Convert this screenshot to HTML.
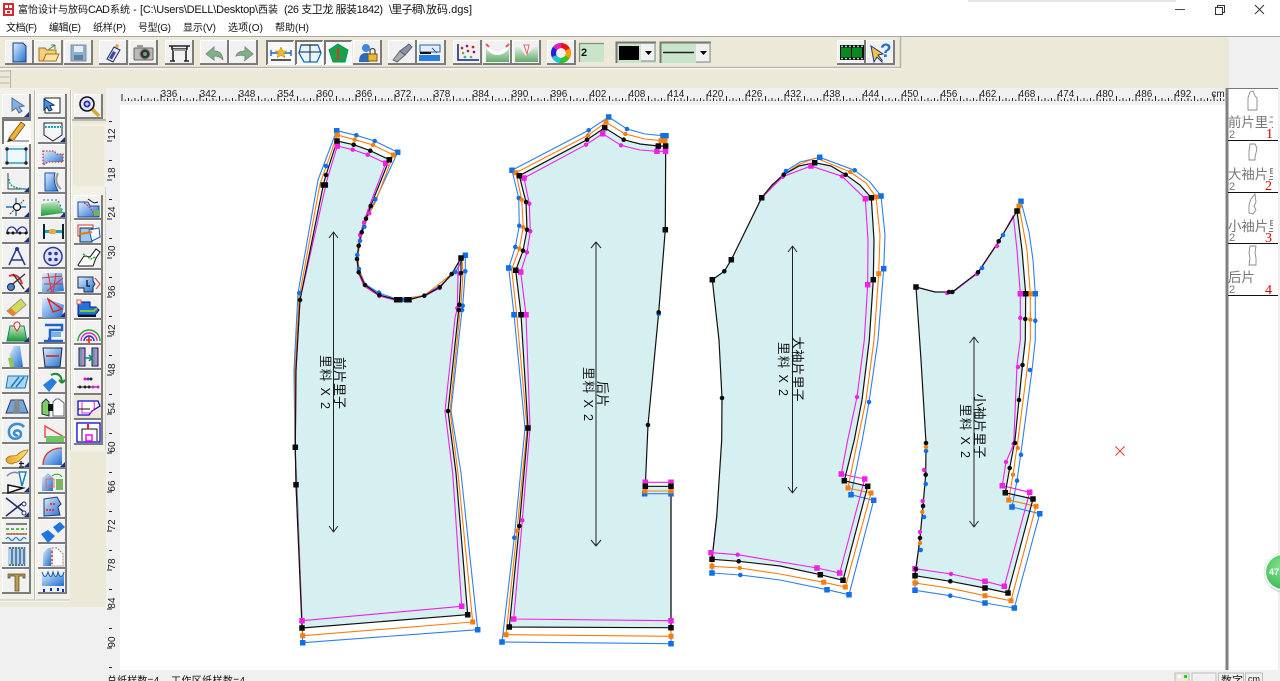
<!DOCTYPE html>
<html><head><meta charset="utf-8"><title>富怡设计与放码CAD系统</title>
<style>
html,body{margin:0;padding:0;background:#fff;width:1280px;height:681px;overflow:hidden}
svg{display:block;position:absolute;left:0;top:0}
text{font-family:"Liberation Sans","Noto Sans CJK SC",sans-serif}
.m{font-size:10px;fill:#111}
.l{font-size:11px;fill:#111}
.r{font-size:10px;fill:#222;text-anchor:middle}
.p{font-size:13px;fill:#111;text-anchor:middle}
.q{font-size:12.5px;fill:#111;text-anchor:middle}
.t{font-size:13.4px;fill:#777}
.n{font-size:11px;fill:#777}
.o{font-size:14px;fill:#d00;font-family:"Liberation Serif",serif}
</style></head><body>
<svg width="1280" height="681" viewBox="0 0 1280 681" xmlns="http://www.w3.org/2000/svg">
<defs>
<linearGradient id="bl" x1="0" y1="0" x2="1" y2="1"><stop offset="0" stop-color="#dff0ff"/><stop offset="1" stop-color="#1f6fd0"/></linearGradient>
<linearGradient id="gr" x1="0" y1="0" x2="0" y2="1"><stop offset="0" stop-color="#c9e9c9"/><stop offset="1" stop-color="#1d9a35"/></linearGradient>
<linearGradient id="gd" x1="0" y1="0" x2="0" y2="1"><stop offset="0" stop-color="#e9f3e9"/><stop offset="1" stop-color="#62ab6b"/></linearGradient>
<linearGradient id="ye" x1="0" y1="0" x2="1" y2="0"><stop offset="0" stop-color="#e5a520"/><stop offset="1" stop-color="#ffe27a"/></linearGradient>
<radialGradient id="gc" cx=".4" cy=".35" r=".8"><stop offset="0" stop-color="#7fe08b"/><stop offset="1" stop-color="#2fb24c"/></radialGradient>
<g id="b"><rect width="29" height="25" fill="#f1f1f1"/><path d="M.5 25V.5H29" fill="none" stroke="#fff"/><path d="M28 0V24H0" fill="none" stroke="#7c7c7c" stroke-width="2"/></g>
<g id="c"><rect width="28" height="25" fill="#f8f8f8"/><path d="M1 25V1H28" fill="none" stroke="#777" stroke-width="2"/><path d="M27.5 1V24.5H1" fill="none" stroke="#fff"/></g>
<path id="k" d="M27 23l-5 0 5-5z" fill="#1b2f88"/>
<pattern id="tt" x="160.5" y="0" width="39" height="17" patternUnits="userSpaceOnUse"><path d="M.5 9V16M20 11V16M7 13V16M13.500 13V16M26.500 13V16M33 13V16M3.750 14.500V16M10.250 14.500V16M16.750 14.500V16M23.250 14.500V16M29.750 14.500V16M36.250 14.500V16" stroke="#222" stroke-width="1" fill="none"/></pattern>
<pattern id="tl" x="0" y="140.500" width="14" height="39" patternUnits="userSpaceOnUse"><path d="M9 .5H14M11 20H14" stroke="#222" fill="none"/></pattern>
<clipPath id="tc"><rect x="1228" y="88" width="45" height="210"/></clipPath>
<clipPath id="gcc"><rect x="1240" y="540" width="40" height="70"/></clipPath>
<clipPath id="sc"><rect x="0" y="670" width="1280" height="11"/></clipPath>
</defs>

<!-- base -->
<rect width="1280" height="681" fill="#fff"/>
<rect x="968" y="0" width="208" height="2" fill="#e4e4e4"/>
<rect y="36" width="1280" height="634" fill="#f0f0f0"/>
<rect y="36" width="1229" height="52" fill="#ece9d8"/>
<path d="M0 36.500H1280" stroke="#a9a9a9"/>
<path d="M0 67.500H901M900.500 37V68" stroke="#b4b4b4" stroke-width="1.500" fill="none"/>
<path d="M0 68.800H901" stroke="#fff"/>
<path d="M0 71H11M0 77H11M0 83H11M10.500 70V88" stroke="#b9b6a8" fill="none"/>

<!-- title -->
<rect x="3" y="3" width="11" height="13" fill="#d9262c"/>
<path d="M5 5h3v3H5zM9 5h3v3H9zM5 10h7v4H5z" fill="#fff"/><path d="M7 11h3v2H7z" fill="#d9262c"/>
<text x="18" y="13" class="m" textLength="70">富怡设计与放码</text>
<text x="88" y="13" class="l" textLength="22">CAD</text>
<text x="110" y="13" class="m" textLength="20">系统</text>
<text x="133" y="13" class="l">-</text>
<text x="140" y="13" class="l" textLength="118">[C:\Users\DELL\Desktop\</text>
<text x="258" y="13" class="m" textLength="20">西装</text>
<text x="284" y="13" class="l" textLength="99">(26 支卫龙 服装1842)</text>
<text x="389" y="13" class="l" textLength="36">\里子稠\</text>
<text x="426" y="13" class="l" textLength="46">放码.dgs]</text>
<path d="M1175 9.500H1185" stroke="#444"/>
<path d="M1215.500 7.500h7v7h-7zM1217.500 7V5.500h7v7H1223" fill="none" stroke="#333"/>
<path d="M1255 5l9 9M1264 5l-9 9" stroke="#333" fill="none"/>

<!-- menu -->
<text x="6" y="31" class="m" textLength="31">文档(F)</text>
<text x="49" y="31" class="m" textLength="32">编辑(E)</text>
<text x="93" y="31" class="m" textLength="33">纸样(P)</text>
<text x="138" y="31" class="m" textLength="33">号型(G)</text>
<text x="183" y="31" class="m" textLength="33">显示(V)</text>
<text x="228" y="31" class="m" textLength="35">选项(O)</text>
<text x="275" y="31" class="m" textLength="34">帮助(H)</text>

<!-- top toolbar -->
<g transform="translate(5,40)"><use href="#b"/><path d="M8 3h10l3 3v16H8z" fill="url(#bl)" stroke="#1c3a78"/></g>
<g transform="translate(34,40)"><use href="#b"/><path d="M5 8h6l2 2h9v11H5z" fill="#f4cf7d" stroke="#a8701c"/><path d="M9 21l3-7h13l-3 7z" fill="#fbe3a2" stroke="#a8701c"/><path d="M14 10l7-5M21 5l-4 0M21 5l0 4" stroke="#4f8a3a" fill="none"/></g>
<g transform="translate(64,40)"><use href="#b"/><rect x="7" y="5" width="15" height="16" fill="#8fb0cd" stroke="#7d8fa5"/><rect x="10" y="6" width="9" height="6" fill="#e7eef4"/><rect x="10" y="15" width="9" height="5" fill="#5f80a5"/></g>
<g transform="translate(99,40)"><use href="#b"/><path d="M8 19L15 7l6 3-7 12z" fill="#e8e8f4" stroke="#1d2560"/><path d="M10 18l4-7 3 1.500-4 7z" fill="#3d4aa0"/><path d="M17 4l3 1-1 3-3-1z" fill="#e6a14a"/></g>
<g transform="translate(129,40)"><use href="#b"/><rect x="5" y="8" width="19" height="12" rx="1" fill="#bdbab4" stroke="#666"/><rect x="8" y="5" width="6" height="3" fill="#999"/><circle cx="16" cy="14" r="5" fill="#333" stroke="#888"/><circle cx="16" cy="14" r="2" fill="#6a7"/></g>
<g transform="translate(165,40)"><use href="#b"/><path d="M4 6h21M7 6v3h15V6M8 9v12M21 9v12M5 21h5M19 21h5" fill="none" stroke="#222" stroke-width="1.600"/><rect x="8" y="9" width="13" height="2" fill="#999"/></g>
<g transform="translate(200,40)"><use href="#b"/><path d="M6 14l8-7v4c5 0 8 2 9 9-2-3-5-4-9-4v4z" fill="#7fb184" stroke="#7e8f84"/></g>
<g transform="translate(229,40)"><use href="#b"/><path d="M24 14l-8-7v4c-5 0-8 2-9 5 3-1 6-1 9 0v4l-1 1z" fill="#7fb184" stroke="#7e8f84"/></g>
<g transform="translate(266,40)"><use href="#c"/><path d="M5 13h20M5 10v6M25 10v6" stroke="#1769c9" stroke-width="1.400" fill="none"/><path d="M15 7l1.800 4h4l-3 2.600 1 4-3.800-2.300-3.800 2.300 1-4-3-2.600h4z" fill="#f2bb1c" stroke="#a87a10" stroke-width=".5"/><path d="M5 20h20" stroke="#222" stroke-width="1.500"/></g>
<g transform="translate(295,40)"><use href="#c"/><path d="M6 5h17l3 8-4 9H9L4 13z" fill="#e5f6ff" stroke="#146dc6" stroke-width="1.300"/><path d="M6 5h17M15 5v17M4 12h22" stroke="#123" fill="none"/></g>
<g transform="translate(324,40)"><use href="#c"/><path d="M14 4l10 6-3 12H9L5 10z" fill="#17a24a" stroke="#095"/><rect x="13" y="8" width="2" height="12" fill="#d33"/></g>
<g transform="translate(353,40)"><use href="#b"/><circle cx="13" cy="8" r="4" fill="#3f86dc"/><path d="M6 22c0-7 3-9 7-9 3 0 5 1 6 4l-3 5z" fill="#2a6ac6"/><rect x="15" y="14" width="9" height="7" fill="#eab92d" stroke="#7a5b10"/><path d="M17 14v-3a2.500 2.500 0 015 0v3" fill="none" stroke="#444" stroke-width="1.200"/></g>
<g transform="translate(388,40)"><use href="#b"/><path d="M5 20l7-9 5 4-8 7z" fill="#a9acb5" stroke="#666"/><path d="M12 11l9-7 3 3-7 8z" fill="#8b93a6" stroke="#5a6070"/></g>
<g transform="translate(417,40)"><use href="#b"/><rect x="3" y="5" width="20" height="7" fill="#e9eef6" stroke="#1b63bf"/><path d="M2 15h21v6H2z" fill="#2a7de0"/><path d="M3 13h11" stroke="#111" stroke-width="2"/><path d="M15 8l5 5" stroke="#1b63bf"/></g>
<g transform="translate(453,40)"><use href="#b"/><path d="M5 4v16h21" fill="none" stroke="#11207a" stroke-width="1.500"/><path d="M9 8h0M14 6h0M20 7h0M10 13h0M15 11h0M21 12h0M12 17h0M18 17h0" stroke-width="2.600" stroke-linecap="round" stroke="#7a3"/><path d="M9 8h0M20 7h0M15 11h0" stroke-width="2.600" stroke-linecap="round" stroke="#c22"/><path d="M14 6h0M21 12h0" stroke-width="2.600" stroke-linecap="round" stroke="#919"/><path d="M12 17h0" stroke-width="2.600" stroke-linecap="round" stroke="#2bb"/></g>
<g transform="translate(483,40)"><use href="#b"/><path d="M3 5c4 13 18 13 23 0v17H3z" fill="url(#gd)"/><path d="M4 6c4 10 17 10 21 0" fill="none" stroke="#fff" stroke-width="3"/><path d="M3 4l3 3M26 4l-3 3" stroke="#e55" stroke-width="2"/></g>
<g transform="translate(512,40)"><use href="#b"/><path d="M3 6l5 2 6 8 7-8 5-2v16H3z" fill="url(#gd)"/><path d="M12 5h5l-2 9z" fill="#fff" stroke="#d66"/></g>
<g transform="translate(547,40)"><use href="#b"/><g fill="none" stroke-width="5" transform="rotate(-90 14 13)"><circle cx="14" cy="13" r="7.500" stroke="#e11"/><circle cx="14" cy="13" r="7.500" stroke="#f90" stroke-dasharray="8 39.100" stroke-dashoffset="-8"/><circle cx="14" cy="13" r="7.500" stroke="#2c2" stroke-dasharray="8 39.100" stroke-dashoffset="-16"/><circle cx="14" cy="13" r="7.500" stroke="#1cc" stroke-dasharray="8 39.100" stroke-dashoffset="-24"/><circle cx="14" cy="13" r="7.500" stroke="#22d" stroke-dasharray="8 39.100" stroke-dashoffset="-32"/><circle cx="14" cy="13" r="7.500" stroke="#d2c" stroke-dasharray="7 40.100" stroke-dashoffset="-40"/></g></g>
<rect x="579" y="43" width="25" height="19" fill="#c8e5cb"/><path d="M579.500 62V43.500H604" fill="none" stroke="#888" stroke-width="1.200"/>
<text x="581" y="56" font-size="11" font-weight="bold" fill="#111">2</text>
<rect x="616" y="42" width="40" height="21" fill="#c8e5cb"/><path d="M616.500 63V42.500H656" fill="none" stroke="#777" stroke-width="2"/>
<rect x="619" y="46" width="20" height="14" fill="#000"/>
<rect x="641" y="44" width="14" height="17" fill="#f1f1f1"/><path d="M655 44v17h-14" fill="none" stroke="#888"/><path d="M645 51h7l-3.500 4z" fill="#000"/>
<rect x="660" y="42" width="51" height="21" fill="#c8e5cb"/><path d="M660.500 63V42.500H711" fill="none" stroke="#777" stroke-width="2"/><path d="M663 52.500H694" stroke="#222" stroke-width="1.500"/>
<rect x="696" y="44" width="14" height="18" fill="#f1f1f1"/><path d="M710 44v18h-14" fill="none" stroke="#888"/><path d="M700 51h7l-3.500 4z" fill="#000"/>
<g transform="translate(837,40)"><use href="#b"/><rect x="3" y="5" width="24" height="15" fill="#111"/><rect x="4" y="7.500" width="10" height="10" fill="#0a8a1e"/><rect x="15" y="7.500" width="10" height="10" fill="#0a8a1e"/><path d="M4 6.200h22M4 18.800h22" stroke="#fff" stroke-dasharray="2 2"/></g>
<g transform="translate(866,40)"><use href="#b"/><path d="M5 6l3 16 3-5 5 5-0-2-4-5 5-1z" fill="#f3c63c" stroke="#223a8a"/><text x="14" y="17" font-size="19" font-weight="bold" fill="#1f6fd4">?</text></g>

<!-- left panels -->
<rect x="0" y="88" width="106" height="519" fill="#ece9d8"/>
<rect x="0" y="88" width="70" height="512" fill="#f2f1e8"/>
<rect x="72" y="119" width="34" height="2" fill="#b8b8b0"/>
<path d="M34.500 90V600M70.500 90V450M72 187H105M72 450H105M105 187V450M0 600H70" stroke="#bdbdb5" fill="none"/>
<path d="M35.500 90V600M71.500 90V450M0 601H70" stroke="#fff" fill="none"/>
<rect x="72" y="125" width="33" height="62" fill="#ece9d8" stroke="#f6f5ee"/>
<rect x="72" y="188" width="33" height="263" fill="#f2f1e8"/>

<!-- col1 -->
<g transform="translate(2,94)"><use href="#b"/><path d="M10 4l0 13 4-3 3 5 3-2-3-4 5-1z" fill="#7fb2e4" stroke="#56708e"/><use href="#k"/></g>
<g transform="translate(2,119)"><rect width="29" height="25" fill="#fbfbfb"/><path d="M1 25V1H29" fill="none" stroke="#777" stroke-width="2"/><path d="M7 19L19 3l4 3-12 16z" fill="#eeb133" stroke="#7a4c10" stroke-width=".8"/><path d="M7 19l-2 4 6-1z" fill="#333"/><path d="M11 22h16" stroke="#aaa" stroke-width="2"/></g>
<g transform="translate(2,144)"><use href="#b"/><rect x="5" y="5" width="19" height="14" fill="#eef7fc" stroke="#1d8cc0" stroke-width="1.300"/><path d="M5 5h0M24 5h0M5 19h0M24 19h0" stroke="#222" stroke-width="3.400" stroke-linecap="round"/></g>
<g transform="translate(2,169)"><use href="#b"/><path d="M6 4v16h19" fill="none" stroke="#444"/><path d="M7 10c0 7 5 9 16 10" fill="none" stroke="#0aa" stroke-dasharray="2 1" stroke-width="1.400"/><path d="M6 4h0M25 20h0" stroke="#222" stroke-width="3"/><use href="#k"/></g>
<g transform="translate(2,194)"><use href="#b"/><path d="M4 13h20M14 4v18" stroke="#1b7cc0" stroke-width="1.400"/><path d="M8 20L22 6" stroke="#444" stroke-dasharray="2 1"/><circle cx="15" cy="13" r="3.500" fill="#fff" stroke="#111" stroke-width="1.300"/><use href="#k"/></g>
<g transform="translate(2,219)"><use href="#b"/><path d="M5 14c0-8 9-8 10 0 1-8 10-8 10 0" fill="none" stroke="#2a3aa0" stroke-width="1.300"/><path d="M4 14H26" stroke="#111"/><path d="M6 14h0M11 14h0M18 14h0M24 14h0" stroke="#111" stroke-width="3" stroke-linecap="round"/><use href="#k"/></g>
<g transform="translate(2,244)"><use href="#b"/><path d="M15 4L7 21M15 4l8 17M9 16h12" fill="none" stroke="#223a8a" stroke-width="1.500"/><circle cx="15" cy="5" r="2" fill="#223a8a"/></g>
<g transform="translate(2,269)"><use href="#b"/><path d="M7 7c8-3 12 3 13 8" fill="none" stroke="#d33" stroke-width="2"/><path d="M7 18L23 5M11 5l11 15" stroke="#333" stroke-width="1.300"/><circle cx="9" cy="18" r="3.500" fill="#4a86d0" stroke="#224"/><use href="#k"/></g>
<g transform="translate(2,294)"><use href="#b"/><path d="M5 17L19 5l5 6-13 11z" fill="#cfdc5a" stroke="#998"/><path d="M5 17l6 5 3-3-5-5z" fill="#ef7f2a"/></g>
<g transform="translate(2,319)"><use href="#b"/><path d="M8 7h14l3 15H5z" fill="url(#gr)" stroke="#186"/><path d="M15 3a3 3 0 013 3c0 2-3 6-3 6s-3-4-3-6a3 3 0 013-3z" fill="#fff" stroke="#d22"/><use href="#k"/></g>
<g transform="translate(2,344)"><use href="#b"/><path d="M12 2h6l3 21H8l3-9-4-2z" fill="url(#bl)"/><path d="M6 14l5-1 1 10H8z" fill="#8fc75a"/></g>
<g transform="translate(2,369)"><use href="#b"/><path d="M6 7h20l-3 12H4z" fill="#a9d6ec" stroke="#1d77b8"/><path d="M9 18l8-10M14 18l8-10" stroke="#1d77b8" stroke-width="1.500"/></g>
<g transform="translate(2,394)"><use href="#b"/><path d="M9 6h12l5 13H4z" fill="#6fa7dd" stroke="#335"/><path d="M13 6l-2 13h7l-1-13z" fill="#888"/></g>
<g transform="translate(2,419)"><use href="#b"/><path d="M22 8c-5-6-16-3-15 6 1 8 12 7 12 1 0-4-6-5-7-1 0 2 3 3 4 2" fill="none" stroke="#3b8fd0" stroke-width="2.600"/></g>
<g transform="translate(2,444)"><use href="#b"/><path d="M4 15c3-5 8-2 11-4 3-3 7-5 11-5-2 5-6 8-9 11-2 2-5 1-7 3-2 0-6-1-6-5z" fill="url(#ye)" stroke="#98670c" stroke-width=".7"/><path d="M19 17v5M17 19.500h5M17 23h5" stroke="#112" stroke-width="1.200"/><use href="#k"/></g>
<g transform="translate(2,469)"><use href="#b"/><path d="M6 16l15 3-15 5z" fill="#fff" stroke="#111" stroke-width="1.500"/><path d="M17 3l7 0-4 14z" fill="#fff" stroke="#1a80c4" stroke-width="1.500"/><path d="M5 7c4-4 8-4 11-3" fill="none" stroke="#78a" stroke-width="1.500"/><use href="#k"/></g>
<g transform="translate(2,494)"><use href="#b"/><path d="M4 4l18 14M4 22l18-14" stroke="#223060" stroke-width="1.600"/><circle cx="22" cy="10" r="2" fill="#fff" stroke="#223060"/><circle cx="22" cy="19" r="2" fill="#fff" stroke="#223060"/><use href="#k"/></g>
<g transform="translate(2,519)"><use href="#b"/><path d="M4 5h21M4 15h21" stroke="#111"/><path d="M4 10h21" stroke="#2a2" stroke-width="1.400" stroke-dasharray="3 2"/><path d="M4 15h21" stroke="#f50" stroke-width="1.400" stroke-dasharray="1.500 1.500"/><path d="M4 20q2-3 4 0t4 0 4 0 4 0 4 0" fill="none" stroke="#18c" stroke-width="1.300"/></g>
<g transform="translate(2,544)"><use href="#b"/><rect x="6" y="3" width="18" height="19" fill="#a9d6ec"/><path d="M7 4h16M7 21h16" stroke="#112" stroke-dasharray="2 1"/><path d="M10 5v15M14 5v15M18 5v15M22 5v15" stroke="#225"/></g>
<g transform="translate(2,569)"><use href="#b"/><path d="M6 5h17v4h-2V7h-4v15h-4V7H8v2H6z" fill="#b99a52" stroke="#554a22" stroke-width=".7"/></g>
<!-- col2 -->
<g transform="translate(38,94)"><use href="#b"/><rect x="7" y="4" width="15" height="15" fill="#fff" stroke="#222"/><path d="M7 4h0M22 4h0M7 19h0M22 19h0" stroke="#111" stroke-width="3"/><path d="M6 5l0 11 3-3 2 4 3-1-2-4 4-1z" fill="#4a90d9" stroke="#135"/></g>
<g transform="translate(38,119)"><use href="#b"/><path d="M6 4h18v12l-9 6-9-6z" fill="#f5f5f5" stroke="#223"/><path d="M7 8h16" stroke="#1ab" stroke-width="2" stroke-dasharray="2 1"/><use href="#k"/></g>
<g transform="translate(38,144)"><use href="#b"/><path d="M5 7h11l3 3h6v8H10l-5 3z" fill="url(#bl)" stroke="#d33" stroke-dasharray="1.500 1.500" stroke-width="1.300"/></g>
<g transform="translate(38,169)"><use href="#b"/><path d="M7 4h10c-2 7 0 12 3 18H7z" fill="url(#bl)" stroke="#1c4ea0"/><path d="M20 4c-3 6-2 12 3 16" fill="none" stroke="#999" stroke-width="2"/></g>
<g transform="translate(38,194)"><use href="#b"/><path d="M3 10l17-3 5 12-22 3z" fill="url(#gr)"/><path d="M5 6h15l6 14" fill="none" stroke="#36c" stroke-dasharray="2 2"/><use href="#k"/></g>
<g transform="translate(38,219)"><use href="#b"/><path d="M6 5v15M25 5v15" stroke="#123" stroke-width="2"/><path d="M7 12.500H24" stroke="#1ab" stroke-width="3"/><rect x="11" y="10" width="7" height="5" rx="2" fill="#eea93c"/></g>
<g transform="translate(38,244)"><use href="#b"/><circle cx="15" cy="12.500" r="9" fill="#dfe3fb" stroke="#2a3aa0" stroke-width="1.500"/><path d="M12 9.500h0M18 9.500h0M12 15.500h0M18 15.500h0" stroke="#2a3aa0" stroke-width="3.600" stroke-linecap="round"/></g>
<g transform="translate(38,269)"><use href="#b"/><path d="M4 4h20l2 18-22 2z" fill="url(#bl)"/><path d="M4 9l20-2M6 15l19 0M10 4l4 20M18 4l-3 20M9 22l16-13" stroke="#d33" fill="none"/></g>
<g transform="translate(38,294)"><use href="#b"/><path d="M4 3l22 8-2 12-20 1z" fill="url(#bl)"/><path d="M10 5l14 10-9 3z" fill="none" stroke="#d22" stroke-width="1.400"/><path d="M10 5h0M24 15h0M15 18h0" stroke="#111" stroke-width="3"/><path d="M10 5h0" stroke="#fe0" stroke-width="2"/><use href="#k"/></g>
<g transform="translate(38,319)"><use href="#b"/><path d="M7 6h17v5H12v9h-2M6 22h19" fill="none" stroke="#1f62c8" stroke-width="2.500"/><rect x="13" y="13" width="10" height="5" fill="#7ab2e8"/></g>
<g transform="translate(38,344)"><use href="#b"/><path d="M5 4h19l-2 19H7z" fill="url(#bl)" stroke="#224"/><path d="M8 12h13" stroke="#d22" stroke-width="1.600"/><path d="M5 4h0M24 4h0" stroke="#fc0" stroke-width="3"/></g>
<g transform="translate(38,369)"><use href="#b"/><path d="M5 16l9-7 5 4-8 10z" fill="#2a7de0"/><path d="M13 6c6-3 11 0 11 8M24 14l-3-3M24 14l3-3" fill="none" stroke="#1d8a3a" stroke-width="2"/></g>
<g transform="translate(38,394)"><use href="#b"/><path d="M4 20V9l4-4 3 3v14z" fill="#7fcf64" stroke="#234"/><path d="M15 22V8l3-3 3 0 5 4v13z" fill="#fff" stroke="#667"/><rect x="10" y="10" width="5" height="7" fill="#111"/></g>
<g transform="translate(38,419)"><use href="#b"/><path d="M7 7l19 11H7z" fill="none" stroke="#e44" stroke-width="1.400"/><rect x="8" y="17" width="18" height="6" fill="#6fc560"/><path d="M7 7h0M26 18h0M7 18h0" stroke="#223" stroke-width="2.500"/></g>
<g transform="translate(38,444)"><use href="#b"/><path d="M5 21c0-10 7-17 19-17v17z" fill="url(#bl)"/><path d="M5 21c0-10 7-17 19-17" fill="none" stroke="#d33" stroke-width="1.300"/><path d="M5 21h0M24 4h0" stroke="#111" stroke-width="3.400"/><use href="#k"/></g>
<g transform="translate(38,469)"><use href="#b"/><path d="M4 22V9l6-5 5 5v13z" fill="url(#bl)"/><path d="M8 10h8v8H8z" fill="none" stroke="#e65"/><rect x="18" y="10" width="7" height="11" fill="#7ab566"/><path d="M14 7c4-3 8-2 10 1" fill="none" stroke="#2a2"/></g>
<g transform="translate(38,494)"><use href="#b"/><path d="M6 5l13-2 4 7-3 3 2 8-16 1z" fill="url(#bl)" stroke="#223a80"/><path d="M12 10h5M8 16h9" stroke="#e33" stroke-width="2" stroke-dasharray="2 1"/></g>
<g transform="translate(38,519)"><use href="#b"/><path d="M15 8l7-5 5 5-7 6zM3 15l7-4 7 6-7 7z" fill="#1f74dd"/><path d="M12 11h0M18 15h0M10 18h0M20 6h0" stroke="#111" stroke-width="3.400"/></g>
<g transform="translate(38,544)"><use href="#b"/><path d="M5 22V9l5-5h3v18z" fill="url(#bl)"/><path d="M14 4h5l6 6v12H14z" fill="#fff" stroke="#888" stroke-dasharray="2 1"/><path d="M14 7v13" stroke="#e22" stroke-dasharray="2 2" stroke-width="1.600"/></g>
<g transform="translate(38,569)"><use href="#b"/><path d="M4 3h22v14H4z" fill="url(#bl)"/><path d="M4 3q3 9 6 0 3 9 5 0 3 9 5 0 3 9 6 0" fill="#dfefff" stroke="#1d4fa0"/><path d="M6 20v3M13 19v3M20 19v3M25 20v3" stroke="#0a2ae0" stroke-width="2"/></g>
<!-- col3 -->
<g transform="translate(74,94)"><use href="#b"/><path d="M18 15l7 7" stroke="#d9a72a" stroke-width="3.400"/><circle cx="13" cy="10" r="7" fill="#e5e5f7" stroke="#111" stroke-width="1.600"/><circle cx="13" cy="10" r="3.500" fill="#2233aa"/><path d="M11 10h4M13 8v4" stroke="#fff"/></g>
<g transform="translate(74,195)"><use href="#b"/><path d="M4 7h10l2 4h9v11H4z" fill="url(#bl)" stroke="#1a4a98"/><path d="M10 8c4 2 8 6 10 13" fill="none" stroke="#e24" stroke-dasharray="2 1"/><path d="M14 4l6 4M20 8l4-1" stroke="#111"/><rect x="20" y="15" width="5" height="6" fill="#6fb74c"/></g>
<g transform="translate(74,220)"><use href="#b"/><path d="M4 5h15v11H4z" fill="#fff" stroke="#d33"/><path d="M6 8h12v14H6z" fill="#9cc8f0" stroke="#133"/><path d="M15 10l10-2 1 9-8 4z" fill="#fff" stroke="#15c"/><path d="M6 14l12-2" stroke="#e70" stroke-width="2"/></g>
<g transform="translate(74,245)"><use href="#b"/><path d="M4 20l6-9 6 1 6-8 4 3-4 6-3 8H5z" fill="#fff" stroke="#111"/><path d="M9 9c3 1 5 4 8 5l4-2" fill="none" stroke="#2a2" stroke-dasharray="2 1" stroke-width="1.300"/></g>
<g transform="translate(74,270)"><use href="#b"/><path d="M4 7h15v4l2 3-2 3v5H10v-4H4z" fill="url(#bl)" stroke="#134"/><path d="M21 8l5 6-4 5" fill="none" stroke="#d33"/><path d="M21 7h0M21 20h0" stroke="#444" stroke-width="2.600"/><path d="M13 10v6h3" stroke="#111" fill="none" stroke-width="1.300"/></g>
<g transform="translate(74,295)"><use href="#b"/><path d="M4 7h12v5h6l3 3-4 5H4z" fill="#1f74dd" stroke="#119" /><path d="M6 16h14l3-3" stroke="#7c3" stroke-width="2" fill="none"/><path d="M4 21h18" stroke="#111" stroke-width="2"/><rect x="3" y="5" width="4" height="4" fill="#fff" stroke="#e54"/></g>
<g transform="translate(74,320)"><use href="#b"/><path d="M4 21a11 11 0 0122 0" fill="none" stroke="#2a2" stroke-width="1.400"/><path d="M7 21a8 8 0 0116 0" fill="none" stroke="#e2d" stroke-width="1.400"/><path d="M10 21a5 5 0 0110 0" fill="none" stroke="#13c" stroke-width="1.400"/><path d="M12 20h6M15 17v6" stroke="#e22" stroke-width="1.600"/></g>
<g transform="translate(74,345)"><use href="#b"/><path d="M5 3h6v18H5zM18 3h6v18h-6z" fill="#b78ad0" stroke="#124"/><path d="M7 21V3M20 21V3" stroke="#2a7"/><path d="M11 13h7M18 13l-3-3M18 13l-3 3" stroke="#087" stroke-width="1.500" fill="none"/></g>
<g transform="translate(74,370)"><use href="#b"/><path d="M3 17h22" stroke="#222"/><path d="M6 17h0M11 17h0M15 17h0" stroke="#222" stroke-width="3" stroke-linecap="round"/><path d="M19 17h0M24 17h0M11 9h0" stroke="#f0d" stroke-width="3" stroke-linecap="round"/><path d="M14 9h0" stroke="#33d" stroke-width="3" stroke-linecap="round"/><path d="M17 9h0" stroke="#222" stroke-width="3" stroke-linecap="round"/></g>
<g transform="translate(74,395)"><rect width="29" height="25" fill="#ece9d8"/><path d="M28 0V24H0" fill="none" stroke="#7c7c7c" stroke-width="2"/><path d="M4 6h20l2 5-8 5-3 4H4z" fill="#fff" stroke="#0a0ae0" stroke-width="1.300"/><path d="M8 6v12h8c4-2 5-5 4-12" fill="none" stroke="#d2d"/><path d="M4 14h12" stroke="#111"/></g>
<g transform="translate(74,420)"><use href="#b"/><rect x="3" y="3" width="23" height="19" fill="#fff" stroke="#0a0ae0" stroke-width="1.300"/><path d="M8 21V9h15v12" fill="none" stroke="#111"/><path d="M14 4v5" stroke="#e22" stroke-width="2"/><rect x="12" y="15" width="6" height="6" fill="#fff" stroke="#f0f" stroke-width="1.500"/></g>

<!-- rulers -->
<rect x="106" y="88" width="1120" height="17" fill="#f0f0f0"/>
<rect x="120" y="88" width="1106" height="17" fill="url(#tt)"/>
<g>
<text class="r" x="169" y="97">336</text><text class="r" x="208" y="97">342</text><text class="r" x="247" y="97">348</text><text class="r" x="286" y="97">354</text><text class="r" x="325" y="97">360</text><text class="r" x="364" y="97">366</text><text class="r" x="403" y="97">372</text><text class="r" x="442" y="97">378</text><text class="r" x="481" y="97">384</text><text class="r" x="520" y="97">390</text><text class="r" x="559" y="97">396</text><text class="r" x="598" y="97">402</text><text class="r" x="637" y="97">408</text><text class="r" x="676" y="97">414</text><text class="r" x="715" y="97">420</text><text class="r" x="754" y="97">426</text><text class="r" x="793" y="97">432</text><text class="r" x="832" y="97">438</text><text class="r" x="871" y="97">444</text><text class="r" x="910" y="97">450</text><text class="r" x="949" y="97">456</text><text class="r" x="988" y="97">462</text><text class="r" x="1027" y="97">468</text><text class="r" x="1066" y="97">474</text><text class="r" x="1105" y="97">480</text><text class="r" x="1144" y="97">486</text><text class="r" x="1183" y="97">492</text><text class="r" x="1218" y="97">cm</text>
</g>
<rect x="120" y="105" width="1106" height="565" fill="#fff"/>
<rect x="106" y="105" width="14" height="565" fill="url(#tl)"/>
<g>
<text class="r" transform="translate(115,134) rotate(-90)">12</text><text class="r" transform="translate(115,173) rotate(-90)">18</text><text class="r" transform="translate(115,212) rotate(-90)">24</text><text class="r" transform="translate(115,251) rotate(-90)">30</text><text class="r" transform="translate(115,291) rotate(-90)">36</text><text class="r" transform="translate(115,330) rotate(-90)">42</text><text class="r" transform="translate(115,369) rotate(-90)">48</text><text class="r" transform="translate(115,408) rotate(-90)">54</text><text class="r" transform="translate(115,447) rotate(-90)">60</text><text class="r" transform="translate(115,486) rotate(-90)">66</text><text class="r" transform="translate(115,525) rotate(-90)">72</text><text class="r" transform="translate(115,564) rotate(-90)">78</text><text class="r" transform="translate(115,603) rotate(-90)">84</text><text class="r" transform="translate(115,642) rotate(-90)">90</text>
</g>

<!-- pieces fill -->
<g fill="#d6f0f1" stroke="none">
<path d="M337 141 353.700 144.700 370.300 150.700 389.300 159.700 370.700 206 366 218.700 361.700 232.300 358.700 245.700 357 259 358.700 272.300 365 285 379.300 295 396.700 299.700 409.300 299.700 424.300 295.700 439.700 287.300 451.700 274 461 258 461 273 459.300 304.700 458.700 310 448 411 456 473 467.700 614.700 302 628 296 484.700 295.300 447.300 296 370 300 300 323.300 185 326 175z"/>
<path d="M604.700 127.700 623.700 139.700 640 144 658.300 146 665.700 146 665.300 229.700 658.700 312.300 648 425 645.300 486.300 671 486.300 671 627.700 509.300 627 519.300 526 528 428 521 314.700 515.700 270.300 523 250.700 527 229.700 526 202 519.300 175.700 587 139.700z"/>
<path d="M712.300 279.700 724.300 271.300 731.300 259.700 761.700 197.700 772 185 783.700 174.700 799 166 814.700 162.700 831 166 845.700 174.700 860 185 871.300 197.700 874 240 873.300 279.700 869.300 340 862 400 854.300 440 844.300 480.700 867.700 486.300 843 580.300 820.300 574.700 780 566 738.700 561.300 712 559.300 716.700 516.700 721.700 440 722 398 719 340z"/>
<path d="M916 287 935 292 952.300 292 978 272.300 998.700 241.300 1017 211 1022 250 1025.700 293.700 1025.300 340 1022.500 365 1015 440 1009.700 468 1005.300 492.700 1033 499 1008 593 985 588 950.300 581.300 915 575.700 920 538 923 506 925.700 474.700 926 443 921 360z"/>
</g>

<!-- lines -->
<g fill="none" stroke-linejoin="round" stroke-width="1.100">
<g stroke="#2f80f0">
<path d="M336.700 130.700 356.300 135.300 374.700 141 397.700 152.300 376 199 370 210 364.300 226.700 360 240.700 357.300 255 359 269 365 284 379 293 396.700 299 409.300 299 424.300 295 439.700 286 455.300 272 465.300 255.300 465.300 271.300 462.700 305.700 462 310 451 411 461 473 477.700 629.700 302.700 642.700 297 485 295 450 294 370 298 293 318 180z"/>
<path d="M608.700 117 627 129 645 134 663 135.700 667 135.700M512 170.300 588.700 130.300 608.700 117M512 170.300 518.700 198 519.300 225.700 515.300 247 508.700 268 514 314.700 525 428 514.300 537.700 502 642 671 643.700 671 493.700 644.700 493.700 646 486"/>
<path d="M761.700 197.700 786 171 800 162 819.700 157.300 854.700 170.300 870 182 881 196 885 235 883.700 268.700 878 340 869 402 862.300 440 851 494.700 873.700 500.300 849 594.700 827 589.700 780 580 740.300 575 712 573 712 559"/>
<path d="M1021 201.300 1029 232 1033 260 1035.300 293.700 1035.300 340 1032 370 1022.700 440 1017 480.700 1012 507 1039.700 513.700 1014.300 608 985 603 950.300 595.700 915 590.300 915 576"/>
</g>
<g stroke="#f97d0b">
<path d="M337.300 135 354.700 139.700 373 145 393.300 155 375 203 368 216 362 232 358 255 359 270 365 285 379 295 396.700 299.500 424.300 295.500 451.700 274 462 257 463 273 461 305 460 312 450 411 458 473 472.700 622 302.700 635.700 296.500 485 295 447 295 370 299 298 320 184z"/>
<path d="M606 122.300 625.300 134 645 139 661 140.700 666 140.700M516 172.700 588 135.300 606 122.300M516 172.700 521.700 199.700 523.300 227.300 519.300 248.700 511.700 269.300 516.700 314.700 527 428 517 531 506 634.700 671 636.300 671 491 645 491"/>
<path d="M761.700 197.700 786 173 800 164 816 158 850.300 172 866 183 876 197 880 235 878.700 273.700 874 340 866 400 857.700 440 848 488 871 493 845.300 587 823.700 582.300 780 574 739.700 568 712 566.300 712 559"/>
<path d="M1019 206 1027 250 1030.300 293.700 1030.300 340 1027 370 1018 440 1013 474.700 1008.700 500 1036 506.300 1011 600.700 985 595.700 950.300 588.300 915 583 915 576"/>
</g>
<g stroke="#f020e8">
<path d="M337.300 146 352.700 149.700 367.700 154.700 385.700 163.300 369.300 206 364 221 360 235 357 258 358 272 364 286 379.300 296 396 300.500M424 296.500 439.700 288 451 275 459 262 458 273.700 457.300 308 455 318 445 411 452.700 473 461.700 606.300 302 620.700M337.300 146 327 180 300 300 296 370 295.300 447.300 296 484.700 302 620"/>
<path d="M602.700 133.700 621 145.300 640 150 657 151.300 665.500 151.300M602.700 133.700 586 144.700 524 178 529.300 203.700 530.300 231.300 527 252.300 520.700 272 526 314.700 530 428 522.300 520.300 513.700 619 671 620.700M645.300 482.300 671 482.300"/>
<path d="M761.700 197.700 782.700 176.700 811 166 842 176.300 865.300 198.700 868 240 867.700 284.700 864.300 340 857 397 847.700 440 841.300 474 864.700 479 839.700 573 817 568 737.700 554.700 711 552.700 712 559 716.700 516.700"/>
<path d="M952 293 978 273 998 243 1013.300 215.700 1017 250 1020.300 293.700 1020.300 340 1017 365 1013.700 444 1006 462 1002.300 485.700 1029.700 492.300 1004.300 586.300 985 581.300 951 574 915 568.700 915 575 920 538"/>
</g>
<g stroke="#111" stroke-width="1.200">
<path d="M337 141 353.700 144.700 370.300 150.700 389.300 159.700 370.700 206 366 218.700 361.700 232.300 358.700 245.700 357 259 358.700 272.300 365 285 379.300 295 396.700 299.700 409.300 299.700 424.300 295.700 439.700 287.300 451.700 274 461 258 461 273 459.300 304.700 458.700 310 448 411 456 473 467.700 614.700 302 628 296 484.700 295.300 447.300 296 370 300 300 323.300 185 326 175z"/>
<path d="M604.700 127.700 623.700 139.700 640 144 658.300 146 665.700 146 665.300 229.700 658.700 312.300 648 425 645.300 486.300 671 486.300 671 627.700 509.300 627 519.300 526 528 428 521 314.700 515.700 270.300 523 250.700 527 229.700 526 202 519.300 175.700 587 139.700z"/>
<path d="M712.300 279.700 724.300 271.300 731.300 259.700 761.700 197.700 772 185 783.700 174.700 799 166 814.700 162.700 831 166 845.700 174.700 860 185 871.300 197.700 874 240 873.300 279.700 869.300 340 862 400 854.300 440 844.300 480.700 867.700 486.300 843 580.300 820.300 574.700 780 566 738.700 561.300 712 559.300 716.700 516.700 721.700 440 722 398 719 340z"/>
<path d="M916 287 935 292 952.300 292 978 272.300 998.700 241.300 1017 211 1022 250 1025.700 293.700 1025.300 340 1022.500 365 1015 440 1009.700 468 1005.300 492.700 1033 499 1008 593 985 588 950.300 581.300 915 575.700 920 538 923 506 925.700 474.700 926 443 921 360z"/>
</g>
<!-- arrows -->
<g stroke="#222" stroke-width="1">
<path d="M333.500 232V532M329 238l4.500-6 4.500 6M329 526l4.500 6 4.500-6"/>
<path d="M596 242V546M591 248l5-6 5 6M591 540l5 6 5-6"/>
<path d="M792.500 246V493M788 252l4.500-6 4.500 6M788 487l4.500 6 4.500-6"/>
<path d="M974 337V527M969.500 343l4.500-6 4.500 6M969.500 521l4.500 6 4.500-6"/>
</g>
<path d="M1115.500 446.500l9 9M1124.500 446.500l-9 9" stroke="#e33" stroke-width="1"/>
</g>

<!-- markers: blue -->
<path fill="none" stroke-linecap="square" stroke="#0f6fe8" stroke-width="5.500" d="M336.700 130.700h0M397.700 152.300h0M465.300 255.300h0M477.700 629.700h0M302.700 642.700h0M608.700 117h0M663 135.700h3M512 170.300h0M508.700 268h0M514 314.700h0M502 642h0M671 643.700h0M644.700 493.700h0M671 493.700h0M819.700 157.300h0M881 196h0M883.700 268.700h0M851 494.700h0M873.700 500.300h0M849 594.700h0M827 589.700h0M712 573h0M1021 201.300h0M1035.300 293.700h0M1012 507h0M1039.700 513.700h0M1014.300 608h0M985 603h0M915 590.300h0"/>
<path fill="none" stroke-linecap="round" stroke="#0f6fe8" stroke-width="4.600" d="M356.300 135.300h0M374.700 141h0M326 166h0M299.300 293h0M375.300 199.300h0M364.300 226.700h0M360 240.700h0M357.300 255h0M359 269h0M379 292.700h0M404 299.700h0M455.300 272h0M465.300 271.300h0M462.700 305.700h0M462 310h0M588.700 130.300h0M627 129h0M518.700 198h0M519.300 225.700h0M515.300 247h0M514.300 537.700h0M658.700 314h0M786 171h0M854.700 170.300h0M869 402h0M740.300 575h0M1035.300 320.700h0M1021 454.700h0M1017 480.700h0M950.300 595.700h0M1003 235h0M982 268h0M926 451h0M925.700 484h0M924 517h0M920.700 550h0M916 583h0M1030 370h0"/>
<!-- markers: orange -->
<path fill="none" stroke-linecap="square" stroke="#f97d0b" stroke-width="5" d="M337.300 135h0M393.300 155h0M472.700 622h0M302.700 635.700h0M606 122.300h0M661 140.700h4M516 172.700h0M506 634.700h0M671 636.300h0M645 491h0M671 491h0M876 197h0M878.700 273.700h0M848 488h0M871 493h0M845.300 587h0M823.700 582.300h0M712 566.300h0M1019 206h0M1030.300 293.700h0M1008.700 500h0M1036 506.300h0M1011 600.700h0M985 595.700h0M915 583h0"/>
<path fill="none" stroke-linecap="round" stroke="#f97d0b" stroke-width="4.400" d="M354.700 139.700h0M373 145h0M588 135.300h0M625.300 134h0M521.700 199.700h0M523.300 227.300h0M519.300 248.700h0M517 531h0M850.300 172h0M739.700 568h0M1030.300 319.700h0M1017.700 448h0M1013 474.700h0M926 447h0M922.300 512h0M920 543h0"/>
<!-- markers: magenta -->
<path fill="none" stroke-linecap="square" stroke="#f020e8" stroke-width="5.500" d="M337.300 146h0M385.700 163.300h0M461.700 606.300h0M302 620.700h0M602.700 133.700h0M657 151.300h0M665.500 151.300h0M524 178h0M520.700 272h0M526 314.700h0M513.700 619h0M671 620.700h0M645.300 482.300h0M671 482.300h0M811 166h0M865.300 198.700h0M867.700 284.700h0M841.300 474h0M864.700 479h0M839.700 573h0M817 568h0M711 552.700h0M1020.300 293.700h0M1002.300 485.700h0M1029.700 492.300h0M1004.300 586.300h0M985 581.300h0M915 568.700h0"/>
<path fill="none" stroke-linecap="round" stroke="#f020e8" stroke-width="4.400" d="M352.700 149.700h0M367.700 154.700h0M369.300 213.300h0M364 222.700h0M360 235h0M379.300 296h0M439.700 288h0M459.300 273.700h0M457.300 308h0M586 144.700h0M621 145.300h0M529.300 203.700h0M530.300 231.300h0M527 252.300h0M522.300 520.300h0M782.700 176.700h0M842 176.300h0M857 397h0M737.700 554.700h0M1020.300 318h0M1013.700 444h0M1006 462h0M951 574h0M997 246h0M977 274h0M947 293h0M1018 367h0M924 470h0M922.700 501h0M920 532h0"/>
<!-- markers: black -->
<path fill="none" stroke-linecap="square" stroke="#0b0b0b" stroke-width="5.500" d="M337 141h0M389.300 159.700h0M323.300 185h2M461 258h0M467.700 614.700h0M302 628h0M296 484.700h0M295.300 447.300h0M396.700 299.700h3M407 299.700h2M604.700 127.700h0M658.300 146h0M665.700 146h0M519.300 175.700h0M515.700 270.300h0M521 314.700h0M665.300 229.700h0M528 428h0M645.300 486.300h0M671 486.300h0M509.300 627h0M671 627.700h0M761.700 197.700h0M731.300 259.700h0M712.300 279.700h0M814.700 162.700h0M871.300 197.700h0M873.300 279.700h0M844.300 480.700h0M867.700 486.300h0M843 580.300h0M820.300 574.700h0M712 559.300h0M916 287h0M1017 211h0M1025.700 293.700h0M1005.300 492.700h0M1033 499h0M1008 593h0M985 588h0M915 575.700h0"/>
<path fill="none" stroke-linecap="round" stroke="#0b0b0b" stroke-width="4.600" d="M353.700 144.700h0M370.300 150.700h0M326 175h0M300 300h0M370.700 206h0M366 218.700h0M361.700 232.300h0M358.700 245.700h0M357 259h0M358.700 272.300h0M365 285h0M379.300 295h0M424.300 295.700h0M439.700 287.300h0M451.700 274h0M461 273h0M459.300 304.700h0M458.700 310h0M448 411h0M587 139.700h0M623.700 139.700h0M526 202h0M527 229.700h0M523 250.700h0M519.300 526h0M658.700 312.300h0M648 425h0M724.300 271.300h0M783.700 174.700h0M845.700 174.700h0M722 398h0M738.700 561.300h0M949 292h0M952.300 292h0M978 272.300h0M998.700 241.300h0M1025.300 319h0M1015 443h0M1009.700 468h0M1022.500 365h0M1019 400h0M950.300 581.300h0M926 443h0M925.700 474.700h0M923 506h0M920 538h0M916 569h0"/>

<!-- piece labels -->
<text class="p" transform="translate(335,383) rotate(90)">前片里子</text>
<text class="q" transform="translate(321,382) rotate(90)" textLength="54">里料 X 2</text>
<text class="p" transform="translate(598,394) rotate(90)">后片</text>
<text class="q" transform="translate(584,394) rotate(90)" textLength="54">里料 X 2</text>
<text class="p" transform="translate(793,369) rotate(90)">大袖片里子</text>
<text class="q" transform="translate(779,369) rotate(90)" textLength="54">里料 X 2</text>
<text class="p" transform="translate(975,426) rotate(90)">小袖片里子</text>
<text class="q" transform="translate(961,431) rotate(90)" textLength="54">里料 X 2</text>

<!-- right panel -->
<rect x="1226" y="88" width="52" height="582" fill="#fff"/>
<rect x="1278" y="88" width="2" height="582" fill="#f0f0f0"/>
<rect x="1225.500" y="88" width="3" height="582" fill="#808080"/>
<path d="M1228 88.500H1278" stroke="#777"/>
<path d="M1228 140.500H1278M1228 192.500H1278M1228 243.500H1278M1228 295.500H1278" stroke="#111" stroke-width="1"/>
<g fill="none" stroke="#888" stroke-width=".9">
<path d="M1250 92l3-1 2 5 2 2v12h-9V98z"/>
<path d="M1250 144h5l2 4-1 5-1 4 0 3h-6l0-9z"/>
<path d="M1255 194l1 8-2 4 2 4-3 4-4-1v-8l2-6z"/>
<path d="M1250 246h6l-1 7 1 5v7h-7l1-7-1-5z"/>
</g>
<g clip-path="url(#tc)">
<text class="t" x="1228" y="127">前片里子</text>
<text class="t" x="1228" y="179">大袖片里子</text>
<text class="t" x="1228" y="231">小袖片里子</text>
<text class="t" x="1228" y="282">后片</text>
</g>
<text class="n" x="1229" y="138">2</text><text class="n" x="1229" y="190">2</text><text class="n" x="1229" y="241">2</text><text class="n" x="1229" y="293">2</text>
<text class="o" x="1266" y="138">1</text><text class="o" x="1265" y="190">2</text><text class="o" x="1265" y="242">3</text><text class="o" x="1265" y="294">4</text>

<!-- green badge -->
<g clip-path="url(#gcc)">
<circle cx="1284" cy="573" r="20" fill="#999" opacity=".3"/>
<circle cx="1283" cy="572" r="19" fill="#fff" stroke="#ccc" stroke-width=".5"/>
<circle cx="1283" cy="572" r="17" fill="url(#gc)"/>
<text x="1269" y="575" font-size="9" font-weight="bold" fill="#fff">47</text>
</g>

<!-- status -->
<g clip-path="url(#sc)">
<rect y="670" width="1280" height="11" fill="#f0f0f0"/>
<text x="107" y="684" class="m" textLength="52">总纸样数=4</text>
<text x="171" y="684" class="m" textLength="74">工作区纸样数=4</text>
<rect x="1175" y="673" width="14" height="10" fill="#ece9d8" stroke="#bbb"/>
<rect x="1178" y="675" width="3" height="3" fill="#fff"/><rect x="1184" y="675" width="3" height="3" fill="#1d1"/>
<rect x="1192" y="673" width="24" height="10" fill="#f0f0f0" stroke="#bbb"/>
<rect x="1218.500" y="673" width="25" height="10" fill="#f0f0f0" stroke="#bbb"/>
<text x="1221" y="684" font-size="11" fill="#111">数字</text>
<rect x="1245.500" y="673" width="17" height="10" fill="#f0f0f0" stroke="#bbb"/>
<text x="1248" y="682" font-size="9" fill="#111">cm</text>
</g>
</svg>
</body></html>
